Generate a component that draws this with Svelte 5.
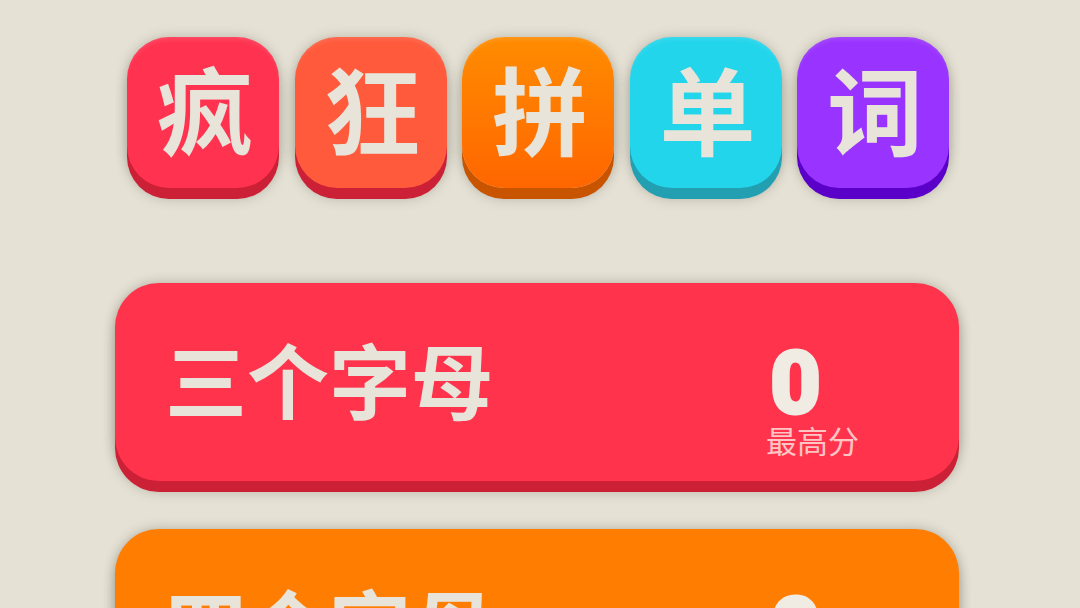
<script>
  const tiles = [
    { ch: '疯', cls: 'red' },
    { ch: '狂', cls: 'coral' },
    { ch: '拼', cls: 'orange' },
    { ch: '单', cls: 'cyan' },
    { ch: '词', cls: 'purple' }
  ];
  const levels = [
    { name: '三个字母', cls: 'lv-red' },
    { name: '四个字母', cls: 'lv-orange' }
  ];
</script>

<main class="page">
  <div class="title">
    {#each tiles as t}
      <div class="tile {t.cls}">{t.ch}</div>
    {/each}
  </div>
  <div class="levels">
    {#each levels as l}
      <div class="card {l.cls}">
        <div class="name">{l.name}</div>
        <div class="score">
          <div class="num">0</div>
          <div class="label">最高分</div>
        </div>
      </div>
    {/each}
  </div>
</main>

<style>
  :global(body) {
    margin: 0;
    background: #e5e1d5;
    overflow: hidden;
  }
  .page {
    height: 608px;
    overflow: hidden;
    box-sizing: border-box;
    padding: 37px 0 0 115px;
    font-family: "Noto Sans CJK SC", sans-serif;
  }
  .title {
    display: flex;
    gap: 15.5px;
    margin-left: 12px;
  }
  .tile {
    width: 152px;
    height: 151px;
    border-radius: 42px;
    display: flex;
    align-items: center;
    justify-content: center;
    box-sizing: border-box;
    padding: 0 0 12px 4px;
    font-size: 96px;
    line-height: 1;
    font-weight: 700;
    color: #e8e4d9;
    box-shadow: inset 0 5px 5px -3px rgba(255, 255, 255, 0.14),
      0 11px 0 var(--edge),
      0 0 12px rgba(70, 70, 50, 0.26),
      0 11px 12px rgba(70, 70, 50, 0.26);
  }
  .red { background: #ff3350; --edge: #cc2036; }
  .coral { background: #ff5a3c; --edge: #cc2036; }
  .orange { background: linear-gradient(#ff8c00, #ff6600); --edge: #c95400; }
  .cyan { background: #22d5eb; --edge: #22a0b2; }
  .purple { background: #9933ff; --edge: #5a00c8; }

  .levels {
    margin-top: 95px;
    display: flex;
    flex-direction: column;
    gap: 48px;
  }
  .card {
    width: 844px;
    height: 198px;
    flex: none;
    border-radius: 44px;
    box-sizing: border-box;
    padding: 0 101px 0 50px;
    display: flex;
    align-items: center;
    justify-content: space-between;
    box-shadow: 0 11px 0 var(--edge),
      0 0 12px rgba(70, 70, 50, 0.32),
      0 11px 12px rgba(70, 70, 50, 0.26);
  }
  .lv-red { background: #ff334c; --edge: #cc2036; }
  .lv-orange { background: #ff7d00; --edge: #c95f00; }
  .name {
    font-size: 82px;
    line-height: 1;
    font-weight: 700;
    color: #e8e4d9;
    margin-bottom: 8px;
  }
  .score {
    width: 92px;
    display: flex;
    flex-direction: column;
    align-items: flex-start;
    padding-top: 38px;
  }
  .num {
    font-family: Roboto, sans-serif;
    font-size: 88px;
    font-weight: 900;
    line-height: 76px;
    height: 76px;
    margin-left: 4px;
    color: #f0ebe3;
    -webkit-text-stroke: 3px #f0ebe3;
  }
  .label {
    font-size: 31px;
    line-height: 36px;
    white-space: nowrap;
    color: #ffc4c4;
    margin-top: 1px;
  }
</style>
